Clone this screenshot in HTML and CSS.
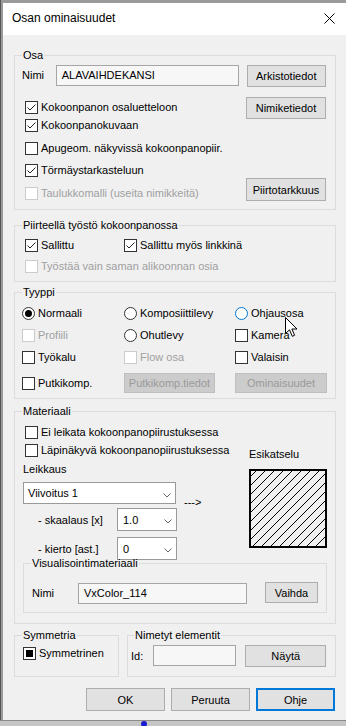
FILE: index.html
```html
<!DOCTYPE html>
<html lang="fi">
<head>
  <meta charset="UTF-8">
  <title>Osan ominaisuudet</title>
  <link rel="stylesheet" href="styles.css">
</head>
<body>
  <div class="desk">
    <div class="window">
      <div class="titlebar">
        <span class="title">Osan ominaisuudet</span>
        <svg class="close" width="11" height="11" viewBox="0 0 11 11"><path d="M0.5 0.5 L10.5 10.5 M10.5 0.5 L0.5 10.5" stroke="#000" stroke-width="1"/></svg>
      </div>

      <div class="content">
        <!-- Osa -->
        <fieldset class="group osa">
          <legend>Osa</legend>
          <div class="name-row">
            <span class="lbl nimi-lbl">Nimi</span>
            <div class="field name-field">ALAVAIHDEKANSI</div>
            <button class="btn side-btn">Arkistotiedot</button>
          </div>
          <div class="osa-body">
            <div class="osa-checks">
              <div class="check on"><span class="box"><svg width="11" height="11" viewBox="0 0 11 11"><path d="M1.5 5.5 L4 8 L9.5 2.5" fill="none" stroke="#222"/></svg></span>Kokoonpanon osaluetteloon</div>
              <div class="check on"><span class="box"><svg width="11" height="11" viewBox="0 0 11 11"><path d="M1.5 5.5 L4 8 L9.5 2.5" fill="none" stroke="#222"/></svg></span>Kokoonpanokuvaan</div>
              <div class="check"><span class="box"></span>Apugeom. näkyvissä kokoonpanopiir.</div>
              <div class="check on"><span class="box"><svg width="11" height="11" viewBox="0 0 11 11"><path d="M1.5 5.5 L4 8 L9.5 2.5" fill="none" stroke="#222"/></svg></span>Törmäystarkasteluun</div>
              <div class="check off"><span class="box"></span>Taulukkomalli (useita nimikkeitä)</div>
            </div>
            <div class="side-btns">
              <button class="btn side-btn">Nimiketiedot</button>
              <button class="btn side-btn">Piirtotarkkuus</button>
            </div>
          </div>
        </fieldset>

        <!-- Piirteellä työstö -->
        <fieldset class="group work">
          <legend>Piirteellä työstö kokoonpanossa</legend>
          <div class="pair">
            <div class="check on"><span class="box"><svg width="11" height="11" viewBox="0 0 11 11"><path d="M1.5 5.5 L4 8 L9.5 2.5" fill="none" stroke="#222"/></svg></span>Sallittu</div>
            <div class="check on"><span class="box"><svg width="11" height="11" viewBox="0 0 11 11"><path d="M1.5 5.5 L4 8 L9.5 2.5" fill="none" stroke="#222"/></svg></span>Sallittu myös linkkinä</div>
          </div>
          <div class="check off"><span class="box"></span>Työstää vain saman alikoonnan osia</div>
        </fieldset>

        <!-- Tyyppi -->
        <fieldset class="group tyyppi">
          <legend>Tyyppi</legend>
          <div class="type-grid">
            <div class="check radio on"><span class="box"></span>Normaali</div>
            <div class="check radio"><span class="box"></span>Komposiittilevy</div>
            <div class="check radio hover"><span class="box"></span>Ohjausosa</div>

            <div class="check off"><span class="box"></span>Profiili</div>
            <div class="check radio"><span class="box"></span>Ohutlevy</div>
            <div class="check"><span class="box"></span>Kamera</div>

            <div class="check"><span class="box"></span>Työkalu</div>
            <div class="check off"><span class="box"></span>Flow osa</div>
            <div class="check"><span class="box"></span>Valaisin</div>

            <div class="check"><span class="box"></span>Putkikomp.</div>
            <button class="btn type-btn" disabled>Putkikomp.tiedot</button>
            <button class="btn type-btn wide" disabled>Ominaisuudet</button>
          </div>
        </fieldset>

        <!-- Materiaali -->
        <fieldset class="group mat">
          <legend>Materiaali</legend>
          <div class="check"><span class="box"></span>Ei leikata kokoonpanopiirustuksessa</div>
          <div class="mat-body">
            <div class="mat-left">
              <div class="check"><span class="box"></span>Läpinäkyvä kokoonpanopiirustuksessa</div>
              <div class="lbl leik-lbl">Leikkaus</div>
              <div class="combo-row">
                <div class="combo combo-wide">Viivoitus 1<svg class="chev" width="8" height="5" viewBox="0 0 8 5"><path d="M0.5 0.5 L4 4 L7.5 0.5" fill="none" stroke="#666"/></svg></div>
                <span class="arrow">---&gt;</span>
              </div>
              <div class="param-row">
                <span class="param-lbl">- skaalaus [x]</span>
                <div class="combo combo-small">1.0<svg class="chev" width="8" height="5" viewBox="0 0 8 5"><path d="M0.5 0.5 L4 4 L7.5 0.5" fill="none" stroke="#666"/></svg></div>
              </div>
              <div class="param-row">
                <span class="param-lbl">- kierto [ast.]</span>
                <div class="combo combo-small">0<svg class="chev" width="8" height="5" viewBox="0 0 8 5"><path d="M0.5 0.5 L4 4 L7.5 0.5" fill="none" stroke="#666"/></svg></div>
              </div>
            </div>
            <div class="mat-right">
              <div class="lbl esik-lbl">Esikatselu</div>
              <svg class="preview" width="78" height="79" viewBox="0 0 78 79">
                <defs>
                  <pattern id="hatch" width="9" height="9" patternUnits="userSpaceOnUse">
                    <path d="M0 9 L9 0 M-1 1 L1 -1 M8 10 L10 8" stroke="#000" stroke-width="1"/>
                  </pattern>
                </defs>
                <rect x="1" y="1" width="76" height="77" fill="url(#hatch)" stroke="#000" stroke-width="2"/>
              </svg>
            </div>
          </div>

          <fieldset class="group vis">
            <legend>Visualisointimateriaali</legend>
            <div class="vis-row">
              <span class="lbl vis-lbl">Nimi</span>
              <div class="field vis-field">VxColor_114</div>
              <button class="btn vis-btn">Vaihda</button>
            </div>
          </fieldset>
        </fieldset>

        <div class="bottom-row">
          <fieldset class="group sym">
            <legend>Symmetria</legend>
            <div class="check mixed"><span class="box"></span>Symmetrinen</div>
          </fieldset>
          <fieldset class="group named">
            <legend>Nimetyt elementit</legend>
            <div class="named-row">
              <span class="lbl id-lbl">Id:</span>
              <div class="field id-field"></div>
              <button class="btn named-btn">Näytä</button>
            </div>
          </fieldset>
        </div>

        <div class="actions">
          <button class="btn act-btn">OK</button>
          <button class="btn act-btn">Peruuta</button>
          <button class="btn act-btn default">Ohje</button>
        </div>
      </div>

      <!-- mouse pointer resting over Ohjausosa -->
      <svg class="pointer" width="13" height="21" viewBox="0 0 13 21"><path d="M0.5 0.5 V16.5 L4.5 12.8 L7.3 19.3 L9.6 18.3 L6.9 12 H12 Z" fill="#fff" stroke="#000" stroke-width="1" stroke-linejoin="round"/></svg>
    </div>
  </div>
  <div class="strip"><span class="blip"></span></div>
</body>
</html>
```

FILE: styles.css
```css
* {
  box-sizing: border-box;
}

html, body {
  margin: 0;
  padding: 0;
}

body {
  width: 346px;
  height: 726px;
  overflow: hidden;
  background: #c6c6c6;
  font-family: "Liberation Sans", Arial, sans-serif;
  font-size: 11px;
  color: #000;
}

.desk {
  height: 720px;
  padding: 3px 0 0 2px;
  background: #9a9a9a;
  border-left: 1px solid #555;
}

.window {
  position: relative;
  height: 717px;
  background: #f0f0f0;
}

.titlebar {
  display: flex;
  align-items: center;
  height: 32px;
  padding: 0 11px 3px 9px;
  background: #fff;
}

.title {
  font-size: 12px;
}

.close {
  margin-left: auto;
  margin-top: 1px;
}

.content {
  padding: 14px 10px 0 11px;
}

/* group boxes */
.group {
  margin: 0;
  min-width: 0;
  border: 1px solid #dcdcdc;
  padding: 0 9px 8px 7px;
}

.group legend {
  padding: 0 1px;
  line-height: 13px;
  font-size: 11px;
}

.lbl {
  line-height: 13px;
}

/* check boxes and radios */
.check {
  display: flex;
  align-items: center;
  height: 13px;
  line-height: 13px;
  margin-left: 3px;
  white-space: nowrap;
}

.box {
  position: relative;
  flex: none;
  width: 13px;
  height: 13px;
  margin-right: 3px;
  border: 1px solid #333;
  background: #fff;
}

.box svg {
  display: block;
}

.check.off {
  color: #a0a0a0;
}

.check.off .box {
  border-color: #cccccc;
}

.radio .box {
  border-radius: 50%;
}

.radio.on .box::after {
  content: "";
  position: absolute;
  left: 2px;
  top: 2px;
  width: 7px;
  height: 7px;
  border-radius: 50%;
  background: #000;
}

.radio.hover .box {
  border-color: #0078d7;
}

.mixed .box::after {
  content: "";
  position: absolute;
  left: 2px;
  top: 2px;
  width: 7px;
  height: 7px;
  background: #000;
}

/* buttons and fields */
.btn {
  margin: 0;
  padding: 0;
  height: 22px;
  border: 1px solid #adadad;
  background: #e1e1e1;
  font-family: inherit;
  font-size: 11px;
  color: #000;
  text-align: center;
}

.btn:disabled {
  background: #cccccc;
  border-color: #bfbfbf;
  color: #9a9a9a;
}

.btn.default {
  border-color: #0078d7;
  box-shadow: inset 0 0 0 1px #0078d7;
}

.field {
  height: 21px;
  line-height: 19px;
  padding-left: 5px;
  border: 1px solid #a5a5a5;
  background: #f7f7f7;
}

.combo {
  display: flex;
  align-items: center;
  height: 22px;
  padding: 0 4px 0 4px;
  border: 1px solid #9a9a9a;
  background: #fff;
}

.chev {
  margin-left: auto;
  margin-top: 4px;
}

/* Osa */
.name-row {
  display: flex;
  align-items: flex-start;
  margin-top: 3px;
}

.nimi-lbl {
  width: 34px;
  margin-top: 4px;
}

.name-field {
  width: 184px;
}

.side-btn {
  width: 80px;
}

.name-row .side-btn {
  margin-left: 8px;
}

.osa-body {
  display: flex;
  justify-content: space-between;
  margin-top: 10px;
}

.osa-checks {
  display: flex;
  flex-direction: column;
  gap: 9.5px;
  padding-top: 4px;
}

.osa-checks .check:first-child {
  margin-bottom: -4.5px;
}

.side-btns {
  display: flex;
  flex-direction: column;
  justify-content: space-between;
  height: 104px;
}

.side-btns .btn:last-child {
  height: 23px;
}

/* Piirteellä työstö */
.work {
  margin-top: 9px;
  padding-top: 7px;
}

.pair {
  display: flex;
  margin-bottom: 8px;
}

.pair .check:first-child {
  width: 96px;
}

/* Tyyppi */
.tyyppi {
  margin-top: 4px;
  padding-top: 8px;
  padding-bottom: 5px;
}

.type-grid {
  display: grid;
  grid-template-columns: 102px 111px 91px;
  grid-template-rows: 13px 13px 13px 20px;
  row-gap: 9px;
  align-items: center;
}

.tyyppi .check {
  margin-left: 0;
}

.type-btn {
  width: 91px;
  height: 20px;
}

.type-btn.wide {
  width: 92px;
}

/* Materiaali */
.mat {
  margin-top: 6px;
  padding: 8px 8px 10px 7px;
}

.mat-body {
  display: flex;
  margin-top: 5px;
}

.mat-left {
  width: 227px;
}

.leik-lbl {
  margin: 6px 0 0 1px;
}

.combo-row {
  display: flex;
  align-items: flex-start;
  height: 22px;
  margin: 6px 0 0 1px;
}

.combo-wide {
  width: 153px;
}

.arrow {
  margin: 14px 0 0 8px;
  line-height: 13px;
}

.param-row {
  display: flex;
  align-items: center;
  height: 23px;
  margin-top: 4px;
  padding-left: 16px;
}

.param-row + .param-row {
  margin-top: 6px;
}

.param-lbl {
  width: 79px;
}

.combo-small {
  width: 60px;
  height: 23px;
  padding-left: 5px;
}

.mat-right {
  width: 78px;
}

.esik-lbl {
  margin-top: 4px;
}

.preview {
  display: block;
  margin-top: 8px;
}

.vis {
  margin: -3px 0 0 1px;
  padding: 12px 8px 8px 7px;
}

.vis-row {
  display: flex;
  align-items: center;
  height: 22px;
}

.vis-lbl {
  width: 46px;
  margin-left: 1px;
}

.vis-field {
  width: 169px;
}

.vis-btn {
  width: 53px;
  height: 21px;
  margin: -1px 0 0 18px;
}

/* Symmetria / Nimetyt elementit */
.bottom-row {
  display: flex;
  gap: 8px;
  margin-top: 5px;
}

.sym {
  width: 105px;
  padding-top: 5px;
}

.sym .check {
  margin-left: 1px;
}

.named {
  flex: 1;
  padding: 3px 9px 9px 3px;
}

.named legend {
  margin-left: 3px;
}

.named-row {
  display: flex;
  align-items: flex-start;
}

.id-lbl {
  width: 22px;
  margin-top: 5px;
}

.id-field {
  width: 84px;
}

.named-btn {
  width: 81px;
  margin-left: 9px;
}

/* dialog buttons */
.actions {
  display: flex;
  justify-content: flex-end;
  gap: 6px;
  margin-top: 11px;
  padding-right: 1px;
}

.act-btn {
  width: 79px;
  height: 23px;
}

.pointer {
  position: absolute;
  left: 282px;
  top: 314px;
}

.strip {
  display: flex;
  height: 6px;
  border-top: 1px solid #8a8a8a;
}

.blip {
  width: 6px;
  height: 6px;
  margin-left: 141px;
  border-radius: 3px;
  background: #1a1ad0;
}
```
